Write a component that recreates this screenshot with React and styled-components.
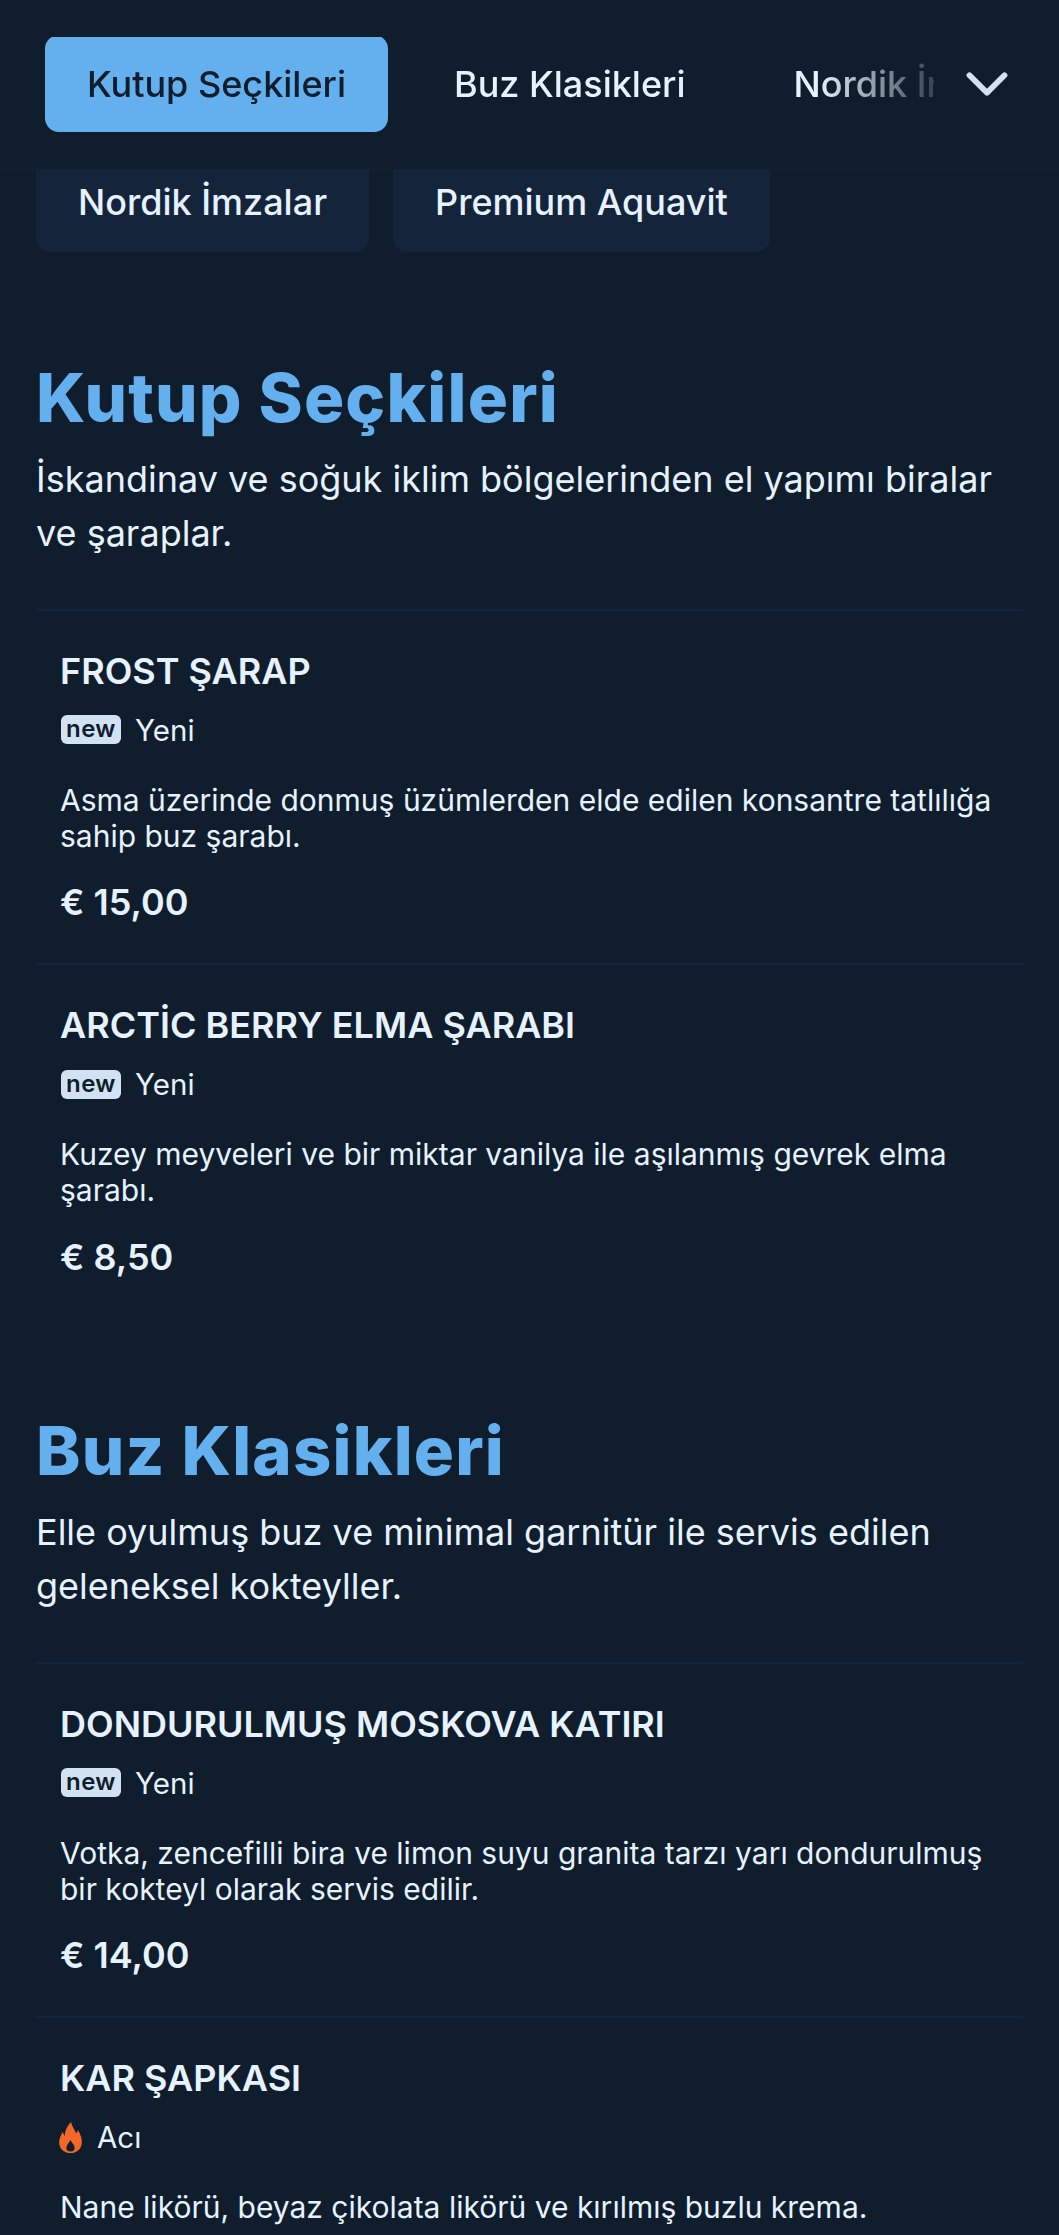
import React from 'react';
import styled, { createGlobalStyle } from 'styled-components';
import { ChevronDown } from 'lucide-react';

const Global = createGlobalStyle`
  html, body { margin: 0; padding: 0; background: #0f1d2c; }
  #root { height: 2235px; overflow: hidden; }
`;
const Page = styled.div`
  background: #0f1d2c; color: #e6f2ff; font-family: Inter, "Liberation Sans", sans-serif;
  height: 2235px; overflow: hidden;
`;
const Header = styled.header`
  position: relative; z-index: 2; height: 169px; display: flex; align-items: center;
  padding: 0 37px 0 45px; background: #0f1d2c; border-bottom: 1px solid #14243a; box-sizing: content-box;
`;
const Tabs = styled.nav`
  flex: 1; display: flex; align-items: center; gap: 24px; overflow: hidden; margin-right: 18px;
  mask-image: linear-gradient(to right, #000 87%, transparent 103%);
`;
const Tab = styled.span`
  flex: none; height: 97px; margin-top: -2px; padding: 0 42px; display: flex; align-items: center;
  font-size: 36px; font-weight: 500; border-radius: 14px; white-space: nowrap;
  background: ${p => (p.$active ? '#64b0ef' : 'transparent')};
  color: ${p => (p.$active ? '#0f1d2c' : '#e6f2ff')};
`;
const Chev = styled(ChevronDown)`
  flex: none; width: 70px; height: 70px; color: #d3e2f3; margin-top: -1px;
`;
const Chips = styled.div`
  display: flex; gap: 24px; padding: 0 36px; margin-top: -30px; height: 112px; position: relative; z-index: 1;
`;
const Chip = styled.span`
  height: 112px; padding: 12px 42px 0; display: flex; align-items: center; box-sizing: border-box;
  background: #14243a; border-radius: 14px; font-size: 36px; font-weight: 500; white-space: nowrap;
`;
const Section = styled.section`
  padding: 0 36px; margin-bottom: 93px;
  &:first-of-type { margin-top: 106px; }
`;
const Title = styled.h2`
  margin: 0 0 14px; font-size: 67px; line-height: 80px; font-weight: 800; color: #64b0ef; letter-spacing: 1.2px;
`;
const Lead = styled.p`
  margin: 0 0 49px; font-size: 36px; line-height: 54px; color: #e6f2ff;
`;
const Item = styled.article`
  border-top: 2px solid #14243a; padding: 38px 24px 39.4px;
`;
const Name = styled.h3`
  margin: 0; font-size: 36px; line-height: 44px; font-weight: 600; color: #e6f2ff;
`;
const Tag = styled.div`
  display: flex; align-items: center; gap: 15px; margin-top: 14.6px; font-size: 29.5px; line-height: 44px;
`;
const Badge = styled.span`
  background: #d3e2f3; color: #0f1d2c; border-radius: 6px; font-size: 24px; font-weight: 600;
  line-height: 28px; height: 29px; width: 60px; margin-left: 1px; margin-right: -1px; text-align: center; letter-spacing: 0.4px;
`;
const FlameSvg = styled.svg`
  flex: none; width: 23px; height: 31px; margin-left: -1px; fill: #f4672a;
`;
const Desc = styled.p`
  margin: 30px 0 0; font-size: 30px; line-height: 36px;
`;
const Price = styled.div`
  margin-top: 26.5px; font-size: 36px; line-height: 44px; font-weight: 600;
`;

const Flame = () => (
  <FlameSvg viewBox="0 0 22 30" aria-hidden="true">
    <path
      fillRule="evenodd"
      d="M11.5 0C12.5 4.5 15 7.5 16.5 11C17.5 10 18 9 18 7.5C20.5 11.5 22 15.5 22 19.5C22 25.5 17.5 30 11 30C4.5 30 0 25.5 0 19.5C0 15.5 2 13 3.5 9.5C4 11 4.5 12.5 5.5 13.5C5.5 8.5 8 3.5 11.5 0ZM11 17.5C9.5 20.5 7 22.5 7 25.2C7 27.5 8.8 28.6 11 28.6C13.2 28.6 15 27.5 15 25.2C15 22.5 12.5 20.5 11 17.5Z"
    />
  </FlameSvg>
);

const sections = [
  { t: 'Kutup Seçkileri', l: 'İskandinav ve soğuk iklim bölgelerinden el yapımı biralar ve şaraplar.', items: [
    { n: 'FROST ŞARAP', d: 'Asma üzerinde donmuş üzümlerden elde edilen konsantre tatlılığa sahip buz şarabı.', p: '€ 15,00' },
    { n: 'ARCTİC BERRY ELMA ŞARABI', d: 'Kuzey meyveleri ve bir miktar vanilya ile aşılanmış gevrek elma şarabı.', p: '€ 8,50' },
  ]},
  { t: 'Buz Klasikleri', l: 'Elle oyulmuş buz ve minimal garnitür ile servis edilen geleneksel kokteyller.', items: [
    { n: 'DONDURULMUŞ MOSKOVA KATIRI', d: 'Votka, zencefilli bira ve limon suyu granita tarzı yarı dondurulmuş bir kokteyl olarak servis edilir.', p: '€ 14,00' },
    { n: 'KAR ŞAPKASI', hot: true, d: 'Nane likörü, beyaz çikolata likörü ve kırılmış buzlu krema.', p: '€ 11,00' },
  ]},
];

export default function App() {
  return (
    <Page>
      <Global />
      <Header>
        <Tabs>
          <Tab $active>Kutup Seçkileri</Tab>
          <Tab>Buz Klasikleri</Tab>
          <Tab>Nordik İmzalar</Tab>
        </Tabs>
        <Chev strokeWidth={2} />
      </Header>
      <Chips>
        <Chip>Nordik İmzalar</Chip>
        <Chip>Premium Aquavit</Chip>
      </Chips>
      {sections.map(s => (
        <Section key={s.t}>
          <Title>{s.t}</Title>
          <Lead>{s.l}</Lead>
          {s.items.map(i => (
            <Item key={i.n}>
              <Name>{i.n}</Name>
              <Tag>
                {i.hot ? <Flame /> : <Badge>new</Badge>}
                {i.hot ? 'Acı' : 'Yeni'}
              </Tag>
              <Desc>{i.d}</Desc>
              <Price>{i.p}</Price>
            </Item>
          ))}
        </Section>
      ))}
    </Page>
  );
}
